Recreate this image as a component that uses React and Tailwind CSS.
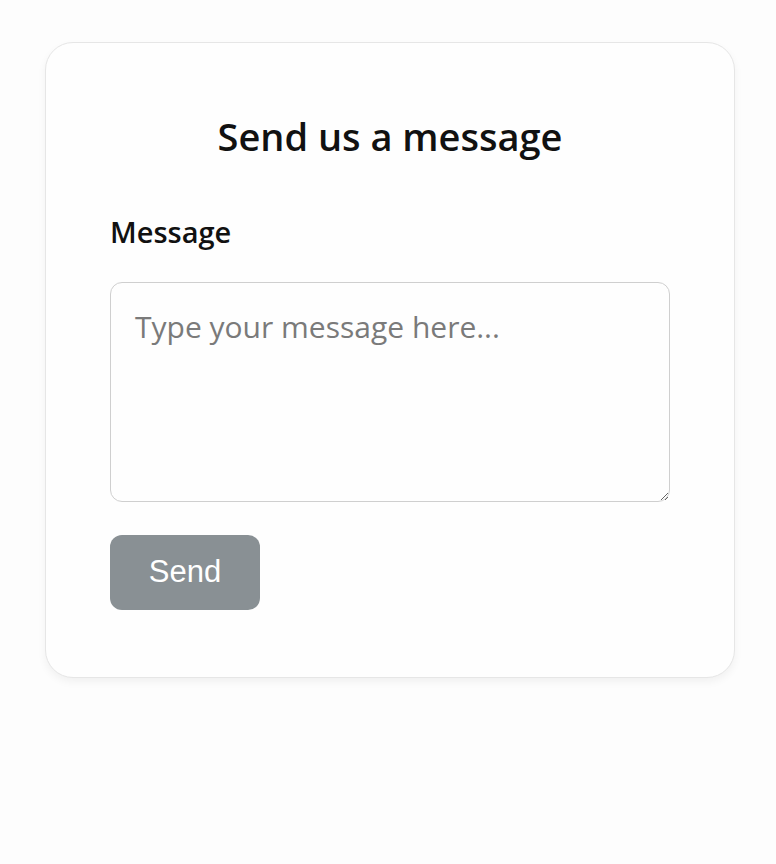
import React, { useState } from 'react'

// Contact form card
const App = () => {
  const [message, setMessage] = useState('')

  return (
    <div className="min-h-screen bg-[#fdfdfd] pl-[45px] pt-[42px] font-['Open_Sans',sans-serif]">
      <div className="w-[690px] rounded-[28px] border border-[#e6e6e6] bg-[#fefefe] px-[64px] pt-[62px] pb-[67px] shadow-[0_4px_8px_rgba(0,0,0,0.05)]">
        <h2 className="text-center text-[38px] leading-[62px] font-semibold text-[#111]">
          Send us a message
        </h2>

        <form className="mt-[46px] flex flex-col" onSubmit={(e) => e.preventDefault()}>
          <label
            htmlFor="message"
            className="text-[29px] leading-[38px] font-semibold text-[#111]"
          >
            Message
          </label>
          <textarea
            id="message"
            value={message}
            onChange={(e) => setMessage(e.target.value)}
            placeholder="Type your message here..."
            className="mt-[31px] h-[220px] w-full resize-y rounded-[12px] border border-[#cfcfcf] bg-[#fefefe] px-[24px] pt-[24px] text-[30px] leading-[40px] text-[#222] outline-none placeholder:text-[#7a7a7a]"
          />
          <button
            type="submit"
            className="mt-[33px] h-[75px] w-[150px] rounded-[12px] bg-[#899094] font-['Liberation_Sans',Arial,sans-serif] text-[31px] text-white"
          >
            Send
          </button>
        </form>
      </div>
    </div>
  )
}

export default App
